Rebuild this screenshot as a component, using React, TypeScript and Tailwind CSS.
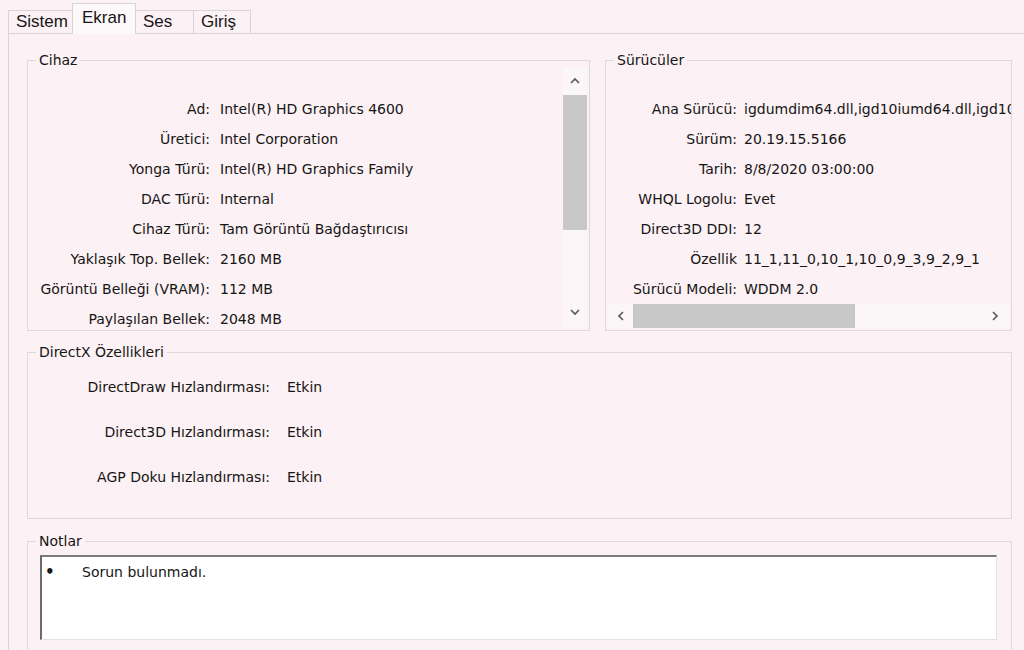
import React from "react";

const cihaz: [string, string][] = [
  ["Ad:", "Intel(R) HD Graphics 4600"],
  ["Üretici:", "Intel Corporation"],
  ["Yonga Türü:", "Intel(R) HD Graphics Family"],
  ["DAC Türü:", "Internal"],
  ["Cihaz Türü:", "Tam Görüntü Bağdaştırıcısı"],
  ["Yaklaşık Top. Bellek:", "2160 MB"],
  ["Görüntü Belleği (VRAM):", "112 MB"],
  ["Paylaşılan Bellek:", "2048 MB"],
];

const suruculer: [string, string][] = [
  ["Ana Sürücü:", "igdumdim64.dll,igd10iumd64.dll,igd10iumd64.dll"],
  ["Sürüm:", "20.19.15.5166"],
  ["Tarih:", "8/8/2020 03:00:00"],
  ["WHQL Logolu:", "Evet"],
  ["Direct3D DDI:", "12"],
  ["Özellik", "11_1,11_0,10_1,10_0,9_3,9_2,9_1"],
  ["Sürücü Modeli:", "WDDM 2.0"],
];

const directx: [string, string][] = [
  ["DirectDraw Hızlandırması:", "Etkin"],
  ["Direct3D Hızlandırması:", "Etkin"],
  ["AGP Doku Hızlandırması:", "Etkin"],
];

const Chevron = ({ dir }: { dir: "up" | "down" | "left" | "right" }) => {
  const pts = {
    up: "1,6 5,2 9,6",
    down: "1,2 5,6 9,2",
    left: "6,1 2,5 6,9",
    right: "2,1 6,5 2,9",
  }[dir];
  const vertical = dir === "up" || dir === "down";
  return (
    <svg
      width={vertical ? 10 : 8}
      height={vertical ? 8 : 10}
      viewBox={vertical ? "0 0 10 8" : "0 0 8 10"}
      fill="none"
    >
      <polyline points={pts} stroke="#5a5a5a" strokeWidth="1.7" />
    </svg>
  );
};

const Tab = ({ label, w, active }: { label: string; w: string; active?: boolean }) => (
  <div
    className={
      active
        ? `${w} h-[31px] -mb-px -ml-px relative z-10 bg-[#fdf8fa] border border-b-0 border-[#d6d6d6] pl-[9px] leading-[28px]`
        : `${w} h-[23px] -ml-px border border-b-0 border-[#d6d6d6] pl-[7px] leading-[22px]`
    }
  >
    {label}
  </div>
);

const Group = ({
  title,
  className,
  children,
}: {
  title: string;
  className: string;
  children: React.ReactNode;
}) => (
  <fieldset className={`border border-[#dadada] ${className}`}>
    <legend className="ml-[8px] px-[3px] leading-[16px]">{title}</legend>
    {children}
  </fieldset>
);

export default function App() {
  return (
    <div className="w-[1024px] h-[650px] overflow-hidden bg-[#fcf1f4] text-[#161616] font-['DejaVu_Sans',sans-serif] text-[14px] flex flex-col">
      <div className="h-[33px] shrink-0 flex items-end pl-[9px] font-['Liberation_Sans',Arial,sans-serif] text-[17px]">
        <Tab label="Sistem" w="w-[65px]" />
        <Tab label="Ekran" w="w-[64px]" active />
        <Tab label="Ses" w="w-[59px]" />
        <Tab label="Giriş" w="w-[58px]" />
      </div>

      <div className="flex-1 ml-2 border-t border-l border-[#d6d6d6] pl-[18px] pr-[12px] pt-[18px] flex flex-col">
        <div className="flex gap-[15px] h-[279px] shrink-0">
          <Group title="Cihaz" className="w-[563px] flex flex-col pb-[2px]">
            <div className="flex flex-1 min-h-0">
              <div className="flex-1 overflow-hidden pt-[26px]">
                {cihaz.map(([l, v]) => (
                  <div key={l} className="flex items-center h-[30px]">
                    <span className="w-[182px] shrink-0 text-right">{l}</span>
                    <span className="ml-[10px] whitespace-nowrap">{v}</span>
                  </div>
                ))}
              </div>
              <div className="w-[24px] mr-[2px] flex flex-col bg-[#fbf6f8]">
                <div className="h-[25px] flex items-center justify-center">
                  <Chevron dir="up" />
                </div>
                <div className="mt-[2px] h-[135px] bg-[#c8c8c8]" />
                <div className="flex-1" />
                <div className="h-[24px] mb-[4px] flex items-center justify-center">
                  <Chevron dir="down" />
                </div>
              </div>
            </div>
          </Group>

          <Group title="Sürücüler" className="flex-1 min-w-0 flex flex-col pb-[2px]">
            <div className="h-[236px] overflow-hidden pt-[26px]">
              {suruculer.map(([l, v]) => (
                <div key={l} className="flex items-center h-[30px]">
                  <span className="w-[131px] shrink-0 text-right">{l}</span>
                  <span className="ml-[7px] whitespace-nowrap">{v}</span>
                </div>
              ))}
            </div>
            <div className="h-[24px] mx-[2px] flex bg-[#fbf6f8]">
              <div className="w-[25px] flex items-center justify-center">
                <Chevron dir="left" />
              </div>
              <div className="w-[222px] bg-[#c8c8c8]" />
              <div className="flex-1" />
              <div className="w-[28px] flex items-center justify-center">
                <Chevron dir="right" />
              </div>
            </div>
          </Group>
        </div>

        <Group title="DirectX Özellikleri" className="mt-[13px] h-[175px] shrink-0 pt-[5px]">
          {directx.map(([l, v]) => (
            <div key={l} className="flex items-center h-[45px]">
              <span className="w-[242px] shrink-0 text-right">{l}</span>
              <span className="ml-[17px]">{v}</span>
            </div>
          ))}
        </Group>

        <Group title="Notlar" className="mt-[14px] h-[140px] shrink-0">
          <div className="mt-[6px] ml-[12px] mr-[14px] h-[85px] bg-white border-t-2 border-l-2 border-t-[#7a7a7a] border-l-[#6a6a6a] border-r border-b border-r-[#e2e2e2] border-b-[#e2e2e2] flex items-start pt-[5px]">
            <span className="ml-[3px] w-[37px] text-[15px] font-bold leading-[20px]">•</span>
            <span className="leading-[20px]">Sorun bulunmadı.</span>
          </div>
        </Group>
      </div>
    </div>
  );
}
